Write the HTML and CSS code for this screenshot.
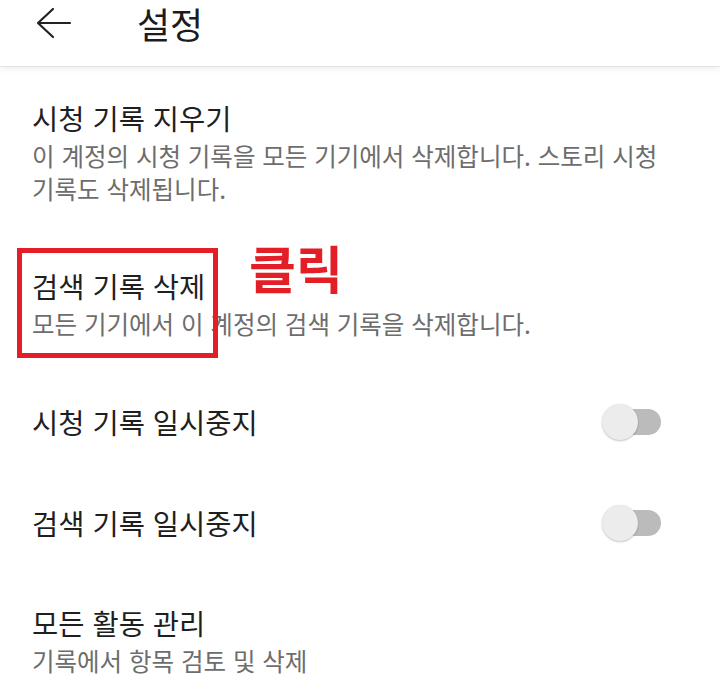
FILE: index.html
```html
<!DOCTYPE html>
<html lang="ko">
<head>
<meta charset="utf-8">
<title>설정</title>
<link rel="stylesheet" href="styles.css">
</head>
<body>
<header class="appbar">
  <div class="appbar-row">
    <svg class="back" width="36" height="34" viewBox="0 0 36 34" aria-hidden="true">
      <path d="M17 3 L2 17 L17 31 M2 17 L34 17" fill="none" stroke="#222" stroke-width="2.2" stroke-linecap="round" stroke-linejoin="round"/>
    </svg>
    <h1 class="title">설정</h1>
  </div>
</header>
<main class="list">
  <section class="item">
    <div class="item-title">시청 기록 지우기</div>
    <div class="item-desc">이 계정의 시청 기록을 모든 기기에서 삭제합니다. 스토리 시청 기록도 삭제됩니다.</div>
  </section>
  <section class="item item-annotated">
    <div class="item-title">검색 기록 삭제</div>
    <div class="item-desc">모든 기기에서 이 계정의 검색 기록을 삭제합니다.</div>
    <div class="mark-box"></div>
    <div class="mark-label">클릭</div>
  </section>
  <section class="item item-toggle">
    <div class="item-title">시청 기록 일시중지</div>
    <div class="toggle"><span class="track"></span><span class="thumb"></span></div>
  </section>
  <section class="item item-toggle">
    <div class="item-title">검색 기록 일시중지</div>
    <div class="toggle"><span class="track"></span><span class="thumb"></span></div>
  </section>
  <section class="item">
    <div class="item-title">모든 활동 관리</div>
    <div class="item-desc">기록에서 항목 검토 및 삭제</div>
  </section>
</main>
</body>
</html>
```

FILE: styles.css
```css
html, body {
  margin: 0;
  padding: 0;
  background: #ffffff;
}
body {
  font-family: "Noto Sans CJK KR", "Noto Sans", sans-serif;
  color: #1f1f1f;
  width: 720px;
  height: 696px;
  overflow: hidden;
  word-break: keep-all;
}
.appbar {
  height: 66px;
  background: #ffffff;
  box-shadow: 0 1px 1px rgba(0,0,0,0.06), 0 3px 6px rgba(0,0,0,0.07);
  position: relative;
  z-index: 2;
}
.appbar-row {
  display: flex;
  align-items: center;
  padding-left: 36px;
  padding-top: 2px;
}
.back {
  display: block;
  margin-top: -1px;
}
.title {
  margin: 0 0 0 65px;
  font-size: 36px;
  font-weight: 400;
  line-height: 42px;
  color: #1c1c1c;
}
.list {
  padding-top: 2px;
}
.item {
  padding: 31px 59px 31px 32px;
}
.item-title {
  font-size: 28.5px;
  line-height: 38px;
  color: #1f1f1f;
}
.item-desc {
  margin-top: 2px;
  font-size: 24.5px;
  line-height: 33px;
  color: #6d6d6d;
}
.item-toggle {
  padding-top: 0;
  padding-bottom: 0;
  height: 101px;
  display: flex;
  align-items: center;
  justify-content: space-between;
}
.toggle {
  position: relative;
  width: 59px;
  height: 38px;
  display: flex;
  align-items: center;
  justify-content: flex-end;
}
.track {
  display: block;
  width: 48px;
  height: 26px;
  border-radius: 13px;
  background: #bbbbbb;
}
.thumb {
  position: absolute;
  left: 0;
  top: 1px;
  width: 36px;
  height: 36px;
  border-radius: 50%;
  background: #ececec;
  box-shadow: 0 1px 2px rgba(0,0,0,0.22), 0 0 1px rgba(0,0,0,0.1);
}
.item-annotated {
  position: relative;
}
.mark-box {
  position: absolute;
  left: 17px;
  top: 12px;
  width: 191px;
  height: 100px;
  border: 5px solid #e31e26;
}
.mark-label {
  position: absolute;
  left: 249px;
  top: 5px;
  font-size: 51px;
  line-height: 52px;
  font-weight: 700;
  color: #e31e26;
}
```
